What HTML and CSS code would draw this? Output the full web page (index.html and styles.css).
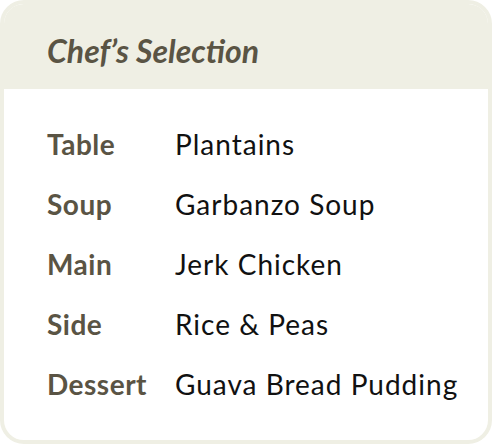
FILE: index.html
```html
<!DOCTYPE html>
<html>
<head>
<meta charset="utf-8">
<link rel="stylesheet" href="styles.css">
</head>
<body>
<div class="card">
  <div class="card-header">
    <h1 class="title">Chef’s Selection</h1>
  </div>
  <div class="card-body">
    <dl class="menu">
      <dt>Table</dt><dd>Plantains</dd>
      <dt>Soup</dt><dd>Garbanzo Soup</dd>
      <dt>Main</dt><dd>Jerk Chicken</dd>
      <dt>Side</dt><dd>Rice &amp; Peas</dd>
      <dt>Dessert</dt><dd>Guava Bread Pudding</dd>
    </dl>
  </div>
</div>
</body>
</html>
```
FILE: styles.css
```css
html, body {
  margin: 0;
  padding: 0;
  background: #ffffff;
}
body {
  font-family: "Lato", "Open Sans", sans-serif;
}
.card {
  width: 492px;
  height: 444px;
  box-sizing: border-box;
  border: 4px solid #efefe4;
  border-radius: 24px;
  overflow: hidden;
  display: flex;
  flex-direction: column;
  background: #ffffff;
}
.card-header {
  background: #efefe4;
  height: 85px;
  box-sizing: border-box;
  padding: 28px 0 0 43px;
}
.title {
  margin: 0;
  font-size: 32px;
  line-height: 38px;
  font-style: italic;
  font-weight: 700;
  color: #5a5444;
}
.card-body {
  flex: 1;
  padding: 25px 0 0 43px;
}
.menu {
  margin: 0;
  display: grid;
  grid-template-columns: 128px auto;
  grid-auto-rows: 60px;
  align-items: center;
  font-size: 28px;
}
.menu dt {
  font-weight: 700;
  color: #5a5444;
  letter-spacing: 0.5px;
}
.menu dd {
  margin: 0;
  color: #111111;
  letter-spacing: 1px;
}
```
